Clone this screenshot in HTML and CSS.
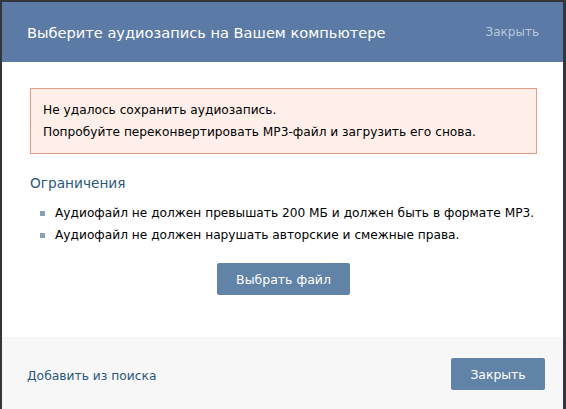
FILE: index.html
```html
<!DOCTYPE html>
<html lang="ru">
<head>
<meta charset="utf-8">
<title>Выберите аудиозапись</title>
<link rel="stylesheet" href="styles.css">
</head>
<body>
<div class="page">
  <div class="modal">
    <div class="modal-header">
      <div class="modal-title">Выберите аудиозапись на Вашем компьютере</div>
      <a class="header-close">Закрыть</a>
    </div>
    <div class="modal-body">
      <div class="error-box">
        <p>Не удалось сохранить аудиозапись.</p>
        <p>Попробуйте переконвертировать MP3-файл и загрузить его снова.</p>
      </div>
      <div class="limits-title">Ограничения</div>
      <ul class="limits">
        <li>Аудиофайл не должен превышать 200 МБ и должен быть в формате MP3.</li>
        <li>Аудиофайл не должен нарушать авторские и смежные права.</li>
      </ul>
      <div class="upload-row">
        <button class="btn btn-upload">Выбрать файл</button>
      </div>
    </div>
    <div class="modal-footer">
      <a class="footer-link">Добавить из поиска</a>
      <button class="btn btn-close">Закрыть</button>
    </div>
  </div>
</div>
</body>
</html>
```
FILE: styles.css
```css
html, body {
  margin: 0;
  padding: 0;
  background: #33373c;
  height: 100%;
  overflow: hidden;
}
.page {
  padding: 2px 3px 0 2px;
  font-family: "DejaVu Sans", "Liberation Sans", sans-serif;
  font-size: 12.2px;
  color: #000;
}
.modal {
  background: #fff;
  height: 407px;
  display: flex;
  flex-direction: column;
}
.modal-header {
  height: 60px;
  background: #5b7ba6;
  display: flex;
  align-items: center;
  justify-content: space-between;
  padding: 0 24px 0 25px;
}
.modal-title {
  color: #fff;
  font-size: 14.6px;
}
.header-close {
  color: #b7c7dc;
  font-size: 12px;
  cursor: pointer;
}
.modal-body {
  padding: 26px 26px 0 28px;
  height: 249px;
}
.error-box {
  background: #ffefe8;
  border: 1px solid #e89a88;
  height: 64px;
  padding: 0 12px;
  display: flex;
  flex-direction: column;
  justify-content: center;
}
.error-box p {
  margin: 0;
  line-height: 21px;
  padding-top: 1px;
}
.limits-title {
  margin-top: 21px;
  color: #2b587a;
  font-size: 13.7px;
  line-height: 16px;
}
.limits {
  list-style: none;
  margin: 11px 0 0;
  padding: 0 0 0 10px;
}
.limits li {
  display: flex;
  align-items: center;
  line-height: 22px;
}
.limits li::before {
  content: "";
  width: 5px;
  height: 5px;
  background: #8a9fba;
  margin-right: 10px;
  flex: none;
}
.upload-row {
  display: flex;
  justify-content: center;
  margin-top: 17px;
}
.btn {
  border: none;
  border-radius: 2px;
  background: #6283a8;
  color: #fff;
  font-family: inherit;
  height: 32px;
  padding: 0;
  cursor: pointer;
}
.btn-upload {
  width: 133px;
  font-size: 12.5px;
}
.btn-close {
  width: 94px;
  font-size: 12.4px;
}
.modal-footer {
  flex: 1;
  background: #f7f7f7;
  display: flex;
  align-items: center;
  justify-content: space-between;
  padding: 2px 18px 0 25px;
}
.footer-link {
  color: #2b587a;
  font-size: 12.3px;
  margin-top: 4px;
  cursor: pointer;
}
```
